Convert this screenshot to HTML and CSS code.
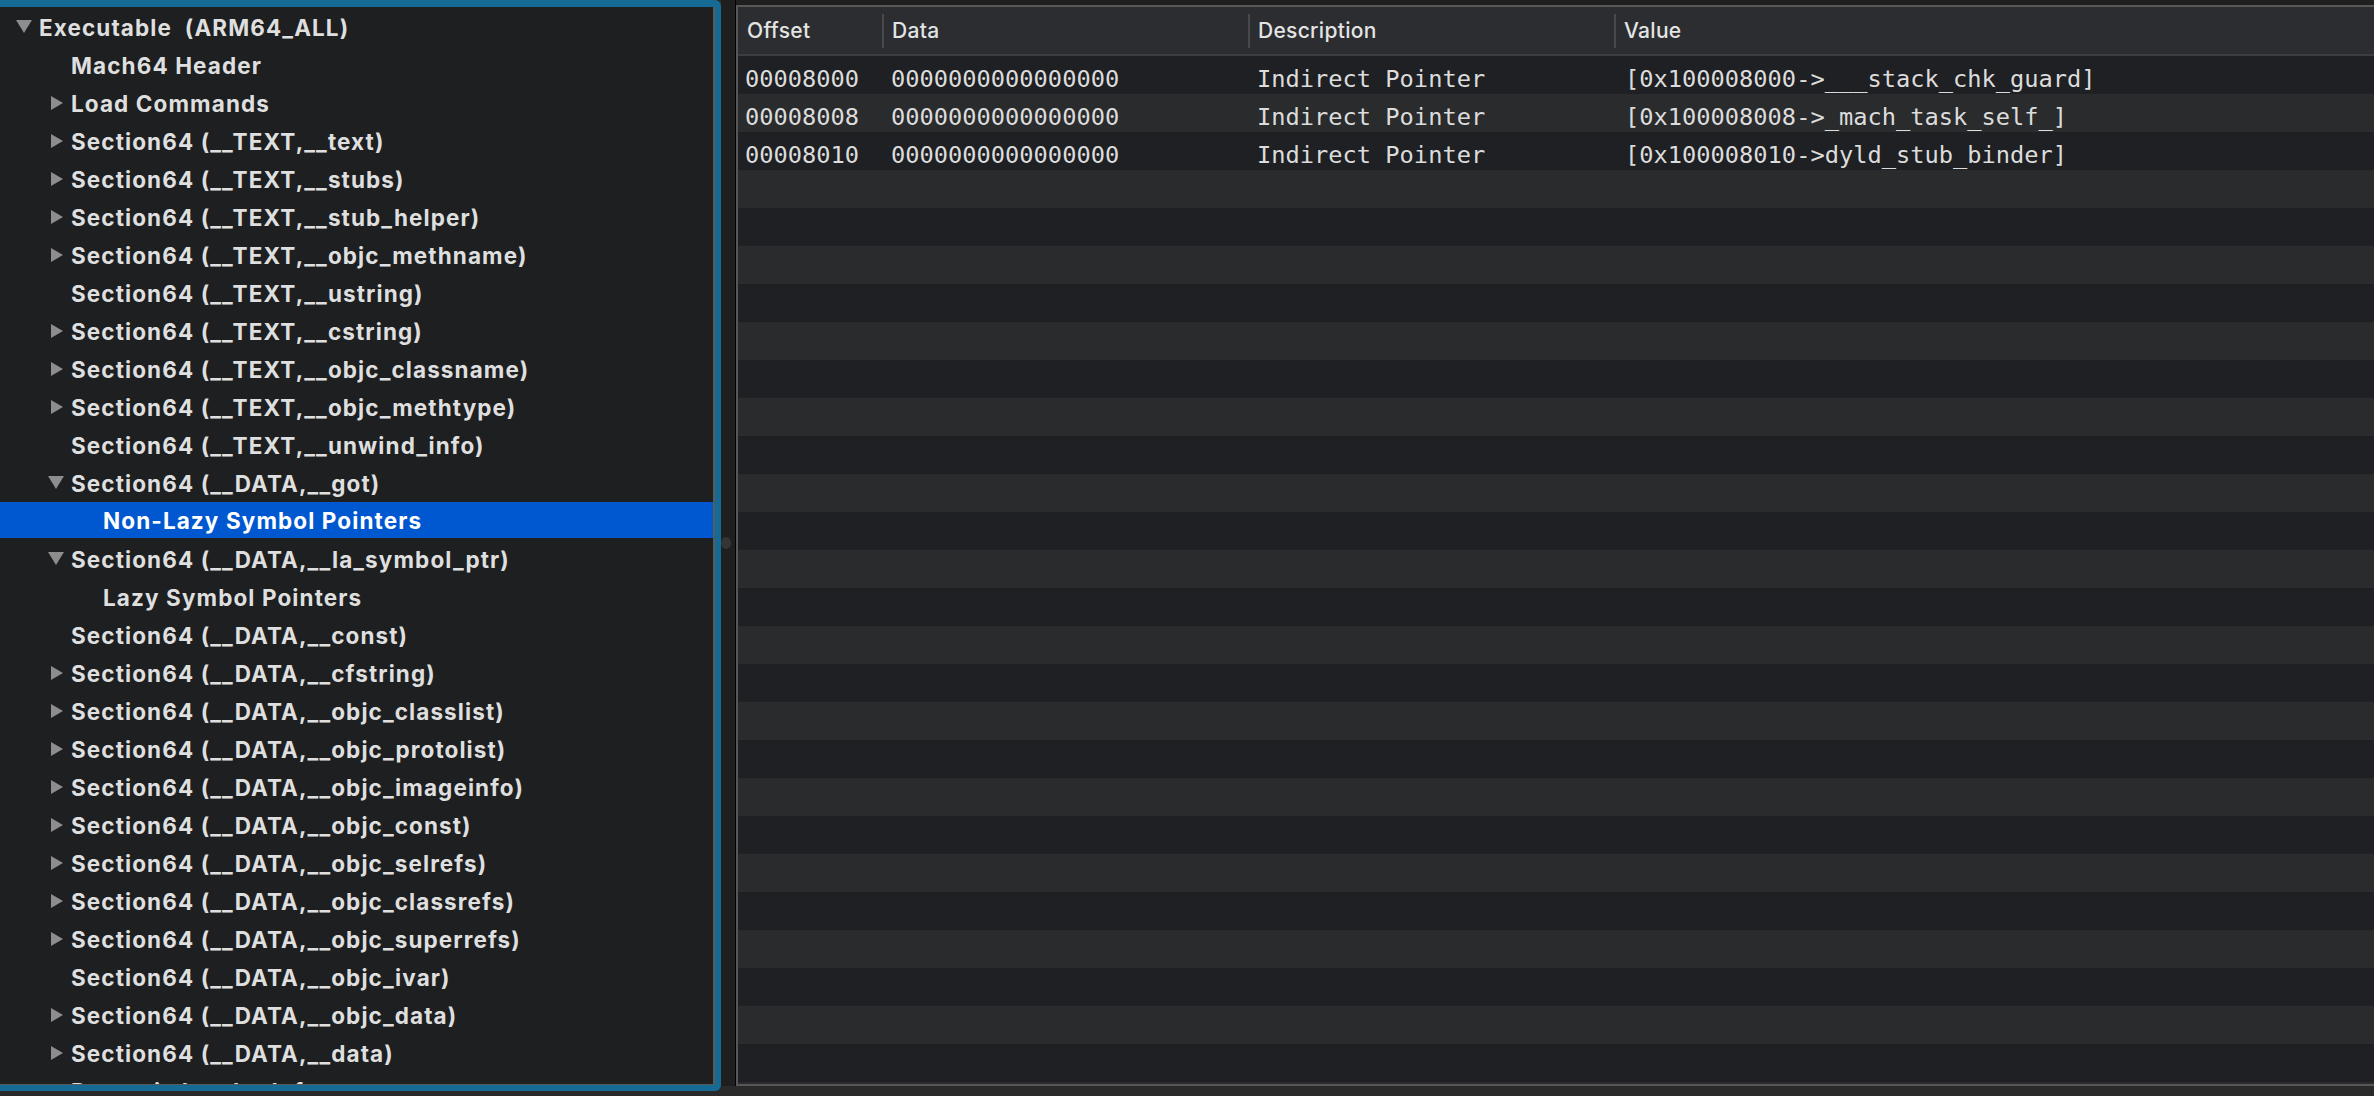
FILE: index.html
```html
<!DOCTYPE html>
<html>
<head>
<meta charset="utf-8">
<link rel="stylesheet" href="styles.css">
</head>
<body>
<div class="window">
  <div class="ring">
    <div class="outline">
      <div class="row l0"><svg class="disc" viewBox="0 0 18 18"><path d="M1 2 L17 2 L9 15 Z"/></svg><span class="label">Executable&nbsp; (ARM64_ALL)</span></div>
      <div class="row l1"><span class="nodisc"></span><span class="label">Mach64 Header</span></div>
      <div class="row l1"><svg class="disc" viewBox="0 0 18 18"><path d="M4 2 L16 9 L4 16 Z"/></svg><span class="label">Load Commands</span></div>
      <div class="row l1"><svg class="disc" viewBox="0 0 18 18"><path d="M4 2 L16 9 L4 16 Z"/></svg><span class="label">Section64 (__TEXT,__text)</span></div>
      <div class="row l1"><svg class="disc" viewBox="0 0 18 18"><path d="M4 2 L16 9 L4 16 Z"/></svg><span class="label">Section64 (__TEXT,__stubs)</span></div>
      <div class="row l1"><svg class="disc" viewBox="0 0 18 18"><path d="M4 2 L16 9 L4 16 Z"/></svg><span class="label">Section64 (__TEXT,__stub_helper)</span></div>
      <div class="row l1"><svg class="disc" viewBox="0 0 18 18"><path d="M4 2 L16 9 L4 16 Z"/></svg><span class="label">Section64 (__TEXT,__objc_methname)</span></div>
      <div class="row l1"><span class="nodisc"></span><span class="label">Section64 (__TEXT,__ustring)</span></div>
      <div class="row l1"><svg class="disc" viewBox="0 0 18 18"><path d="M4 2 L16 9 L4 16 Z"/></svg><span class="label">Section64 (__TEXT,__cstring)</span></div>
      <div class="row l1"><svg class="disc" viewBox="0 0 18 18"><path d="M4 2 L16 9 L4 16 Z"/></svg><span class="label">Section64 (__TEXT,__objc_classname)</span></div>
      <div class="row l1"><svg class="disc" viewBox="0 0 18 18"><path d="M4 2 L16 9 L4 16 Z"/></svg><span class="label">Section64 (__TEXT,__objc_methtype)</span></div>
      <div class="row l1"><span class="nodisc"></span><span class="label">Section64 (__TEXT,__unwind_info)</span></div>
      <div class="row l1"><svg class="disc" viewBox="0 0 18 18"><path d="M1 2 L17 2 L9 15 Z"/></svg><span class="label">Section64 (__DATA,__got)</span></div>
      <div class="row l2 selected"><span class="nodisc"></span><span class="label">Non-Lazy Symbol Pointers</span></div>
      <div class="row l1"><svg class="disc" viewBox="0 0 18 18"><path d="M1 2 L17 2 L9 15 Z"/></svg><span class="label">Section64 (__DATA,__la_symbol_ptr)</span></div>
      <div class="row l2"><span class="nodisc"></span><span class="label">Lazy Symbol Pointers</span></div>
      <div class="row l1"><span class="nodisc"></span><span class="label">Section64 (__DATA,__const)</span></div>
      <div class="row l1"><svg class="disc" viewBox="0 0 18 18"><path d="M4 2 L16 9 L4 16 Z"/></svg><span class="label">Section64 (__DATA,__cfstring)</span></div>
      <div class="row l1"><svg class="disc" viewBox="0 0 18 18"><path d="M4 2 L16 9 L4 16 Z"/></svg><span class="label">Section64 (__DATA,__objc_classlist)</span></div>
      <div class="row l1"><svg class="disc" viewBox="0 0 18 18"><path d="M4 2 L16 9 L4 16 Z"/></svg><span class="label">Section64 (__DATA,__objc_protolist)</span></div>
      <div class="row l1"><svg class="disc" viewBox="0 0 18 18"><path d="M4 2 L16 9 L4 16 Z"/></svg><span class="label">Section64 (__DATA,__objc_imageinfo)</span></div>
      <div class="row l1"><svg class="disc" viewBox="0 0 18 18"><path d="M4 2 L16 9 L4 16 Z"/></svg><span class="label">Section64 (__DATA,__objc_const)</span></div>
      <div class="row l1"><svg class="disc" viewBox="0 0 18 18"><path d="M4 2 L16 9 L4 16 Z"/></svg><span class="label">Section64 (__DATA,__objc_selrefs)</span></div>
      <div class="row l1"><svg class="disc" viewBox="0 0 18 18"><path d="M4 2 L16 9 L4 16 Z"/></svg><span class="label">Section64 (__DATA,__objc_classrefs)</span></div>
      <div class="row l1"><svg class="disc" viewBox="0 0 18 18"><path d="M4 2 L16 9 L4 16 Z"/></svg><span class="label">Section64 (__DATA,__objc_superrefs)</span></div>
      <div class="row l1"><span class="nodisc"></span><span class="label">Section64 (__DATA,__objc_ivar)</span></div>
      <div class="row l1"><svg class="disc" viewBox="0 0 18 18"><path d="M4 2 L16 9 L4 16 Z"/></svg><span class="label">Section64 (__DATA,__objc_data)</span></div>
      <div class="row l1"><svg class="disc" viewBox="0 0 18 18"><path d="M4 2 L16 9 L4 16 Z"/></svg><span class="label">Section64 (__DATA,__data)</span></div>
      <div class="row l1"><svg class="disc" viewBox="0 0 18 18"><path d="M4 2 L16 9 L4 16 Z"/></svg><span class="label">Dynamic Loader Info</span></div>
    </div>
  </div>
  <div class="right">
    <div class="splitter"><span class="grip"></span></div>
    <div class="table">
      <div class="thead">
        <div class="th">Offset</div>
        <div class="th sep">Data</div>
        <div class="th sep">Description</div>
        <div class="th sep">Value</div>
      </div>
      <div class="tbody">
        <div class="tr"><div class="td c1">00008000</div><div class="td">0000000000000000</div><div class="td">Indirect Pointer</div><div class="td c4">[0x100008000-&gt;___stack_chk_guard]</div></div>
        <div class="tr"><div class="td c1">00008008</div><div class="td">0000000000000000</div><div class="td">Indirect Pointer</div><div class="td c4">[0x100008008-&gt;_mach_task_self_]</div></div>
        <div class="tr"><div class="td c1">00008010</div><div class="td">0000000000000000</div><div class="td">Indirect Pointer</div><div class="td c4">[0x100008010-&gt;dyld_stub_binder]</div></div>
        <div class="tr"></div><div class="tr"></div><div class="tr"></div><div class="tr"></div><div class="tr"></div>
        <div class="tr"></div><div class="tr"></div><div class="tr"></div><div class="tr"></div><div class="tr"></div>
        <div class="tr"></div><div class="tr"></div><div class="tr"></div><div class="tr"></div><div class="tr"></div>
        <div class="tr"></div><div class="tr"></div><div class="tr"></div><div class="tr"></div><div class="tr"></div>
        <div class="tr"></div><div class="tr"></div><div class="tr"></div><div class="tr"></div><div class="tr"></div>
      </div>
    </div>
  </div>
</div>
</body>
</html>
```

FILE: styles.css
```css
* { box-sizing: border-box; }
html, body {
  margin: 0;
  padding: 0;
  background: #2a2a2a;
  overflow: hidden;
}
.window {
  display: flex;
  align-items: flex-start;
  width: 2374px;
  height: 1096px;
  background: #2a2a2a;
  font-family: Inter, "Liberation Sans", sans-serif;
}
.ring {
  width: 721px;
  height: 1091px;
  flex: none;
  background: #166a96;
  padding: 7px 6px 6px 0;
  border-radius: 0 6px 6px 0;
}
.outline {
  height: 100%;
  background: #1e1f21;
  border-right: 2px solid #5a5a5a;
  border-bottom: 1px solid #5a5a5a;
  padding-top: 1px;
  overflow: hidden;
}
.row {
  display: flex;
  align-items: center;
  height: 38px;
  color: #dfdfdf;
  font-size: 22.5px;
  font-weight: 700;
  letter-spacing: 1.1px;
  white-space: nowrap;
}
.row.l0 { padding-left: 15px; }
.row.l1 { padding-left: 47px; }
.row.l2 { padding-left: 79px; }
.disc, .nodisc {
  width: 18px;
  height: 18px;
  flex: none;
  margin-right: 6px;
  fill: #8d8d8d;
}
.row.selected {
  background: #0058d0;
  color: #ffffff;
  height: 36px;
  margin-bottom: 2px;
}
.right {
  flex: 1;
  display: flex;
  height: 1086px;
  background: #1f1f20;
}
.splitter {
  width: 15px;
  flex: none;
  border-right: 1px solid #000;
  display: flex;
  align-items: center;
  justify-content: center;
}
.grip {
  width: 12px;
  height: 12px;
  border-radius: 50%;
  background: #353536;
  margin-right: 4px;
}
.table {
  flex: 1;
  margin-top: 5px;
  border: 2px solid #575757;
  border-right: none;
  display: flex;
  flex-direction: column;
  overflow: hidden;
  background: #1f2023;
}
.thead {
  display: grid;
  grid-template-columns: 144px 366px 366px 1fr;
  height: 49px;
  flex: none;
  background: #2b2d30;
  border-bottom: 2px solid #3d3e41;
}
.th {
  position: relative;
  display: flex;
  align-items: center;
  padding-left: 9px;
  color: #e4e4e4;
  font-size: 21px;
  font-weight: 500;
  letter-spacing: 0.3px;
}
.th.sep { padding-left: 10px; }
.th.sep::before {
  content: "";
  position: absolute;
  left: 0;
  top: 7px;
  bottom: 6px;
  width: 2px;
  background: #47494c;
}
.tbody {
  flex: 1;
  overflow: hidden;
}
.tr {
  display: grid;
  grid-template-columns: 144px 366px 366px 1fr;
  height: 38px;
  background: #1f2023;
}
.tr:nth-child(even) { background: #2a2b2d; }
.td {
  padding: 7px 0 0 9px;
  line-height: 32px;
  color: #dcdcdc;
  font-family: "DejaVu Sans Mono", "Liberation Mono", monospace;
  font-size: 23.7px;
  white-space: nowrap;
}
.td.c1 { padding-left: 7px; }
.td.c4 { padding-left: 11px; }
```
